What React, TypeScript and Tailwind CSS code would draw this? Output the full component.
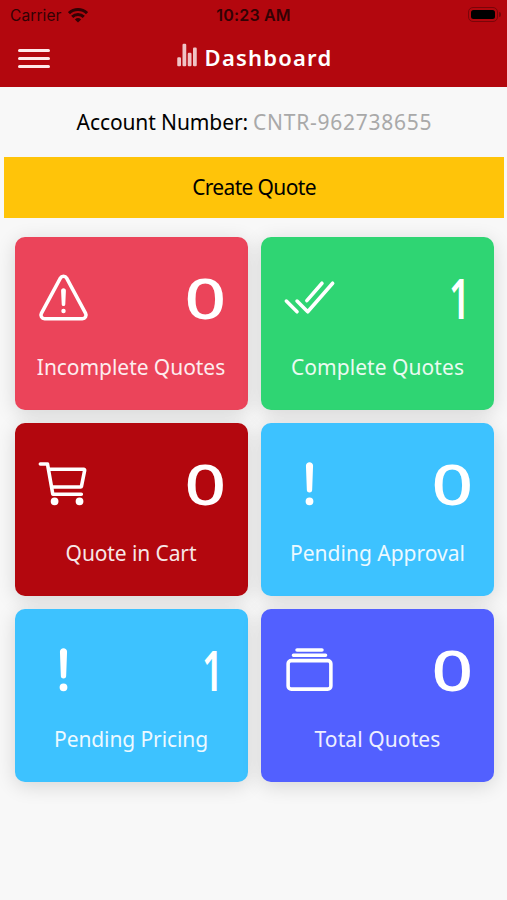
import type { IconType } from 'react-icons'
import {
  IoAlbumsOutline,
  IoAlertOutline,
  IoCartOutline,
  IoCheckmarkDoneOutline,
  IoStatsChart,
  IoWarningOutline,
} from 'react-icons/io5'

interface Tile {
  label: string
  count: number
  icon: IconType
  bg: string
  tracking: string
}

const tiles: Tile[] = [
  { label: 'Incomplete Quotes', count: 0, icon: IoWarningOutline, bg: 'bg-[#eb445a]', tracking: 'tracking-[-0.05px]' },
  { label: 'Complete Quotes', count: 1, icon: IoCheckmarkDoneOutline, bg: 'bg-[#2fd573]', tracking: 'tracking-[0.05px]' },
  { label: 'Quote in Cart', count: 0, icon: IoCartOutline, bg: 'bg-[#b3070e]', tracking: 'tracking-[-0.1px]' },
  { label: 'Pending Approval', count: 0, icon: IoAlertOutline, bg: 'bg-[#3dc2ff]', tracking: 'tracking-[0px]' },
  { label: 'Pending Pricing', count: 1, icon: IoAlertOutline, bg: 'bg-[#3dc2ff]', tracking: 'tracking-[-0.1px]' },
  { label: 'Total Quotes', count: 0, icon: IoAlbumsOutline, bg: 'bg-[#5260ff]', tracking: 'tracking-[0.1px]' },
]

function WifiIcon() {
  return (
    <svg width="20" height="15" viewBox="0 0 20 15" fill="none" stroke="currentColor" strokeWidth="3">
      <path d="M1 5.2a13 13 0 0 1 18 0" />
      <path d="M4.2 8.9a8.3 8.3 0 0 1 11.6 0" />
      <path d="M10 14.6 6.9 11.5a4.5 4.5 0 0 1 6.2 0z" fill="currentColor" stroke="none" />
    </svg>
  )
}

function StatusBar() {
  return (
    <div className="grid h-[30px] grid-cols-3 items-center px-[10px] font-['Inter',sans-serif] text-[#320204]">
      <div className="flex items-center gap-[6px] pt-px text-[15.5px] tracking-[0.1px]">
        Carrier
        <WifiIcon />
      </div>
      <div className="text-center text-[16px] font-semibold whitespace-nowrap tracking-[0.2px]">10:23 AM</div>
      <div className="-mr-1 mb-[2px] flex items-center justify-end gap-px">
        <div className="h-[15px] w-[30px] rounded-[5px] border border-[#7a0509] p-[2px]">
          <div className="h-full rounded-[2.5px] bg-black" />
        </div>
        <div className="h-[5px] w-[1.5px] rounded-r bg-[#7a0509]" />
      </div>
    </div>
  )
}

function Header() {
  return (
    <header className="h-[87px] bg-[#b3070e]">
      <StatusBar />
      <div className="grid h-[57px] grid-cols-[60px_1fr_60px] items-center text-white">
        <button className="ml-[18px] flex w-8 flex-col gap-[5px]">
          <span className="h-[3px] rounded-full bg-[#ffe9e9]" />
          <span className="h-[3px] rounded-full bg-[#ffe9e9]" />
          <span className="h-[3px] rounded-full bg-[#ffe9e9]" />
        </button>
        <h1 className="flex items-center justify-center gap-[6px] pb-[2px] text-[22px] font-semibold tracking-[1.2px]">
          <IoStatsChart className="mb-[6px] size-6 text-[#f0c3c5]" />
          Dashboard
        </h1>
      </div>
    </header>
  )
}

function TileCard({ tile }: { tile: Tile }) {
  const Icon = tile.icon
  // the "1" is set narrow, every other digit wide
  const digit = tile.count === 1 ? 'scale-x-[0.66] mr-[2px] font-semibold' : 'scale-x-[1.3] -mr-px font-medium'
  return (
    <div className={`flex h-[172.5px] flex-col rounded-[10px] text-white shadow-[0_4px_20px_rgba(0,0,0,0.14)] ${tile.bg}`}>
      <div className="flex h-[120px] items-center justify-between pr-[22px] pl-[20px]">
        <Icon className="size-[57px] [&_circle]:fill-current [&_circle]:stroke-[38px]" />
        <span className={`origin-right text-[56px] leading-none ${digit}`}>{tile.count}</span>
      </div>
      <div className={`text-center text-[21px] leading-5 whitespace-nowrap opacity-90 ${tile.tracking}`}>{tile.label}</div>
    </div>
  )
}

export default function App() {
  return (
    <div className="min-h-[900px] w-[507px] bg-[#f8f8f8] font-['Noto_Sans',sans-serif]">
      <Header />
      <div className="flex h-[70px] items-center justify-center gap-[5px] pt-px pl-[2px] text-[21px] whitespace-nowrap text-black">
        <span className="tracking-[-0.1px]">Account Number:</span>
        <span className="tracking-[0.75px] text-[#a9a9a9]">CNTR-962738655</span>
      </div>
      <button className="mx-1 block h-[61px] w-[500px] bg-[#ffc409] text-[21px] tracking-[-0.65px] text-black">Create Quote</button>
      <main className="mt-[19px] grid grid-cols-2 gap-[13.5px] pr-[13px] pl-[14.5px]">
        {tiles.map((tile) => (
          <TileCard key={tile.label} tile={tile} />
        ))}
      </main>
    </div>
  )
}
